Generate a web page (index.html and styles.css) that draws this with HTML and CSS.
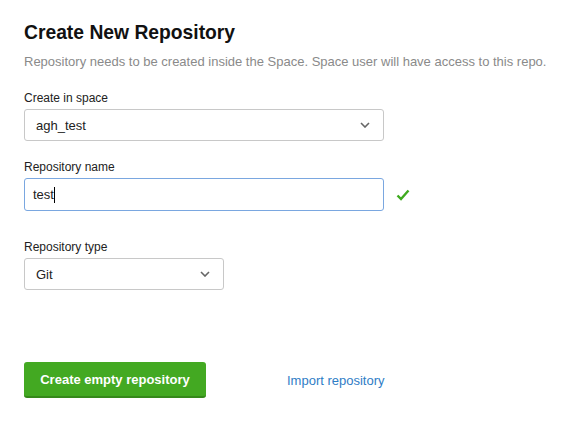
FILE: index.html
```html
<!DOCTYPE html>
<html>
<head>
<meta charset="utf-8">
<link rel="stylesheet" href="styles.css">
</head>
<body>
<div class="page">
  <h1 class="title">Create New Repository</h1>
  <p class="subtitle">Repository needs to be created inside the Space. Space user will have access to this repo.</p>

  <div class="field field-space">
    <label class="label">Create in space</label>
    <div class="select wide">
      <span class="value">agh_test</span>
      <svg class="chev" width="10" height="6" viewBox="0 0 10 6"><path d="M1 1l4 4 4-4" fill="none" stroke="#666" stroke-width="1.6"/></svg>
    </div>
  </div>

  <div class="field field-name">
    <label class="label">Repository name</label>
    <div class="row">
      <div class="input wide"><span class="value">test</span><span class="caret"></span></div>
      <svg class="check" width="14" height="12" viewBox="0 0 14 12"><path d="M1.5 6.5l3.5 3.5 7.5-8.5" fill="none" stroke="#3faa1f" stroke-width="2.4"/></svg>
    </div>
  </div>

  <div class="field field-type">
    <label class="label">Repository type</label>
    <div class="select narrow">
      <span class="value">Git</span>
      <svg class="chev" width="10" height="6" viewBox="0 0 10 6"><path d="M1 1l4 4 4-4" fill="none" stroke="#666" stroke-width="1.6"/></svg>
    </div>
  </div>

  <div class="actions">
    <button class="btn">Create empty repository</button>
    <a class="link" href="#">Import repository</a>
  </div>
</div>
</body>
</html>
```
FILE: styles.css
```css
html, body { margin: 0; padding: 0; background: #fff; }
body { font-family: "Liberation Sans", Arial, sans-serif; color: #222; }
.page { padding: 20px 24px 0 24px; }
.title { margin: 0; font-size: 19.3px; font-weight: bold; color: #111; line-height: 26px; }
.subtitle { margin: 8px 0 0 0; font-size: 13px; color: #8a8a8a; line-height: 16px; white-space: nowrap; }
.field { display: flex; flex-direction: column; }
.field-space { margin-top: 21px; }
.field-name { margin-top: 19px; }
.field-type { margin-top: 29px; }
.label { font-size: 12px; line-height: 14px; color: #222; margin-bottom: 4px; }
.select, .input { box-sizing: border-box; height: 32px; border: 1px solid #c8c8c8; border-radius: 3px; display: flex; align-items: center; padding: 0 11px; font-size: 13px; color: #222; }
.wide { width: 360px; }
.narrow { width: 200px; }
.select { justify-content: space-between; }
.chev { margin-right: 2px; }
.row { display: flex; align-items: center; gap: 12px; }
.input { border-color: #7aa7e0; height: 33px; padding-left: 8px; }
.caret { width: 1px; height: 16px; background: #000; }
.check { display: block; }
.actions { margin-top: 72px; display: flex; align-items: center; }
.btn { box-sizing: border-box; width: 182px; height: 36px; border: 0; border-bottom: 2px solid #35891a; border-radius: 3px; background: #43a922; color: #fff; font-family: "Liberation Sans", Arial, sans-serif; font-size: 13px; font-weight: bold; padding: 0; }
.link { margin-left: 81px; color: #2f7dc6; font-size: 13px; text-decoration: none; }
```
